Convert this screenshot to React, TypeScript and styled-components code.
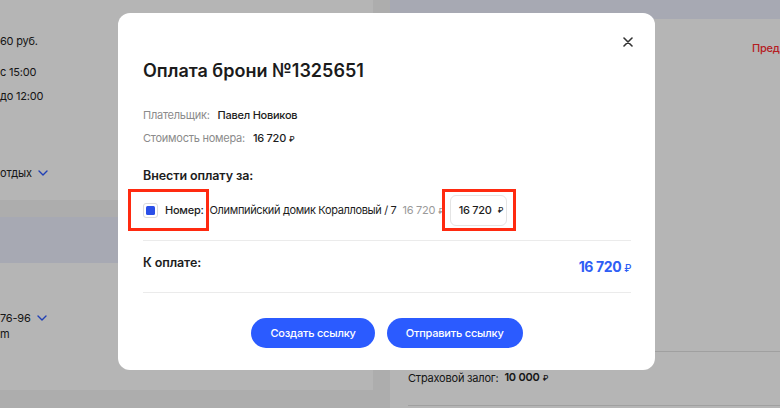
import styled, { createGlobalStyle } from 'styled-components';

const GlobalStyle = createGlobalStyle`
  html, body { margin: 0; padding: 0; }
  body {
    font-family: Inter, "Noto Sans", sans-serif;
    color: #1d1d1d;
    background: #f4f4f4;
    overflow: hidden;
  }
  * { box-sizing: border-box; }
`;

const Page = styled.div`
  display: grid;
  grid-template-columns: 373px 1fr;
  column-gap: 17px;
  height: 408px;
  overflow: hidden;
  background: #f4f4f4;
`;

const Column = styled.div`
  display: flex;
  flex-direction: column;
  gap: 17px;
`;

const Card = styled.div<{ $h?: number }>`
  background: #fff;
  display: flex;
  flex-direction: column;
  overflow: hidden;
  height: ${p => (p.$h ? `${p.$h}px` : 'auto')};
`;

const CardHead = styled.div<{ $h: number }>`
  height: ${p => p.$h}px;
  background: #eceffc;
  flex-shrink: 0;
`;

const CardBody = styled.div<{ $pl?: number; $pt?: number }>`
  display: flex;
  flex-direction: column;
  padding: ${p => p.$pt ?? 0}px 0 0 ${p => p.$pl ?? 0}px;
`;

const BgLine = styled.div<{ $mt?: number; $ml?: number }>`
  display: flex;
  align-items: center;
  gap: 6px;
  font-size: 11px;
  letter-spacing: -0.2px;
  line-height: 16px;
  color: #222;
  white-space: nowrap;
  margin-top: ${p => p.$mt ?? 0}px;
  margin-left: ${p => p.$ml ?? 0}px;
`;

const RedLink = styled(BgLine)`
  color: #ff2b30;
  font-weight: 500;
`;

const BgDivider = styled.div<{ $mt: number }>`
  height: 1px;
  background: #e2e2e2;
  margin: ${p => p.$mt}px 0 0 18px;
`;

const Bold = styled.span`
  font-weight: 600;
`;

const Rub = styled.span`
  font-size: 0.72em;
  font-weight: 500;
  margin-left: 3px;
`;

const Chevron = () => (
  <svg width="10" height="6" viewBox="0 0 10 6" fill="none">
    <polyline points="1,1 5,5 9,1" stroke="#2f5bff" strokeWidth="1.4" strokeLinecap="round" strokeLinejoin="round" />
  </svg>
);

const Overlay = styled.div`
  position: fixed;
  inset: 0;
  background: rgba(0, 0, 0, 0.29);
  padding: 13px 0 0 118px;
`;

const Modal = styled.div`
  position: relative;
  width: 537px;
  height: 357px;
  background: #fff;
  border-radius: 12px;
  padding: 46px 24px 0 25px;
  display: flex;
  flex-direction: column;
  font-size: 11px;
  letter-spacing: -0.25px;
`;

const CloseButton = styled.button`
  position: absolute;
  top: 24px;
  right: 22px;
  width: 10px;
  height: 10px;
  padding: 0;
  border: none;
  background: none;
  display: flex;
  cursor: pointer;
`;

const Title = styled.h2`
  margin: 0;
  font-size: 18px;
  line-height: 24px;
  font-weight: 600;
  letter-spacing: 0;
  color: #1b1b1b;
`;

const InfoList = styled.div`
  display: flex;
  flex-direction: column;
  gap: 7px;
  margin-top: 24px;
`;

const InfoRow = styled.div`
  display: flex;
  gap: 8px;
  line-height: 16px;
`;

const InfoLabel = styled.span`
  color: #8b8b8b;
`;

const InfoValue = styled.span`
  color: #1d1d1d;
  font-weight: 500;
`;

const SectionTitle = styled.div<{ $mt?: number }>`
  font-size: 12.5px;
  line-height: 18px;
  font-weight: 600;
  letter-spacing: -0.1px;
  margin-top: ${p => p.$mt ?? 0}px;
`;

const ItemRow = styled.div`
  display: flex;
  align-items: center;
  height: 42px;
  margin-top: 4px;
  margin-left: -15px;
  white-space: nowrap;
`;

const Highlight = styled.div<{ $pl: number; $pr: number; $ml?: number }>`
  display: flex;
  align-items: center;
  gap: 7px;
  height: 42px;
  flex-shrink: 0;
  border: 3px solid #ff2a10;
  padding: 0 ${p => p.$pr}px 0 ${p => p.$pl}px;
  margin-left: ${p => p.$ml ?? 0}px;
`;

const Checkbox = styled.span`
  width: 15px;
  height: 15px;
  border: 1px solid #dcdcdc;
  border-radius: 3px;
  display: flex;
  align-items: center;
  justify-content: center;
  &::after {
    content: '';
    width: 9px;
    height: 9px;
    border-radius: 1.5px;
    background: #2a4fe8;
  }
`;

const ItemLabel = styled.span`
  font-weight: 500;
  color: #1d1d1d;
`;

const ItemName = styled.span`
  margin-left: 1px;
  letter-spacing: -0.35px;
  color: #1d1d1d;
`;

const ItemPrice = styled.span`
  margin-left: 6px;
  color: #9a9a9a;
`;

const AmountField = styled.div`
  width: 57px;
  height: 31px;
  flex-shrink: 0;
  border: 1px solid #e4e4e4;
  border-radius: 6px;
  display: flex;
  align-items: center;
  padding: 0 0 0 8px;
  font-weight: 500;
  & > span {
    margin-left: 6px;
  }
`;

const Divider = styled.div<{ $mt: number }>`
  height: 1px;
  background: #ebebeb;
  margin-top: ${p => p.$mt}px;
`;

const TotalRow = styled.div`
  display: flex;
  justify-content: space-between;
  align-items: flex-start;
  height: 51px;
  padding-top: 13px;
`;

const TotalAmount = styled.span`
  font-size: 14px;
  line-height: 18px;
  font-weight: 700;
  letter-spacing: -0.4px;
  color: #2e5ef5;
  margin-top: 4px;
`;

const Actions = styled.div`
  display: flex;
  justify-content: center;
  gap: 12px;
  margin-top: 25px;
`;

const Button = styled.button`
  height: 30px;
  padding: 0 19px;
  border: none;
  border-radius: 15px;
  background: #2b5bff;
  color: #fff;
  font-family: inherit;
  font-size: 11px;
  letter-spacing: -0.2px;
  font-weight: 500;
  cursor: pointer;
`;

export default function App() {
  return (
    <>
      <GlobalStyle />
      <Page>
        <Column>
          <Card $h={200}>
            <CardBody $pt={33}>
              <BgLine>60 руб.</BgLine>
              <BgLine $mt={15}>с 15:00</BgLine>
              <BgLine $mt={8}>до 12:00</BgLine>
              <BgLine $mt={61}>
                отдых <Chevron />
              </BgLine>
            </CardBody>
          </Card>
          <Card $h={173}>
            <CardHead $h={46} />
            <CardBody $pt={47}>
              <BgLine>
                76-96 <Chevron />
              </BgLine>
              <BgLine>m</BgLine>
            </CardBody>
          </Card>
        </Column>
        <Card>
          <CardHead $h={19} />
          <CardBody>
            <RedLink $mt={21} $ml={362}>Пред</RedLink>
            <BgDivider $mt={295} />
            <BgLine $mt={17} $ml={18}>
              Страховой залог: <Bold>10 000<Rub>₽</Rub></Bold>
            </BgLine>
            <BgDivider $mt={19} />
          </CardBody>
        </Card>
      </Page>

      <Overlay>
        <Modal>
          <CloseButton aria-label="Закрыть">
            <svg width="10" height="10" viewBox="0 0 10 10">
              <path d="M1 1 L9 9 M9 1 L1 9" stroke="#333" strokeWidth="1.6" strokeLinecap="round" />
            </svg>
          </CloseButton>
          <Title>Оплата брони №1325651</Title>
          <InfoList>
            <InfoRow>
              <InfoLabel>Плательщик:</InfoLabel>
              <InfoValue>Павел Новиков</InfoValue>
            </InfoRow>
            <InfoRow>
              <InfoLabel>Стоимость номера:</InfoLabel>
              <InfoValue>16 720<Rub>₽</Rub></InfoValue>
            </InfoRow>
          </InfoList>
          <SectionTitle $mt={20}>Внести оплату за:</SectionTitle>
          <ItemRow>
            <Highlight $pl={12} $pr={2}>
              <Checkbox />
              <ItemLabel>Номер:</ItemLabel>
            </Highlight>
            <ItemName>Олимпийский домик Коралловый / 7</ItemName>
            <ItemPrice>16 720<Rub>₽</Rub></ItemPrice>
            <Highlight $pl={5} $pr={6} $ml={-2}>
              <AmountField>
                16 720<Rub>₽</Rub>
              </AmountField>
            </Highlight>
          </ItemRow>
          <Divider $mt={9} />
          <TotalRow>
            <SectionTitle>К оплате:</SectionTitle>
            <TotalAmount>16 720<Rub>₽</Rub></TotalAmount>
          </TotalRow>
          <Divider $mt={0} />
          <Actions>
            <Button>Создать ссылку</Button>
            <Button>Отправить ссылку</Button>
          </Actions>
        </Modal>
      </Overlay>
    </>
  );
}
